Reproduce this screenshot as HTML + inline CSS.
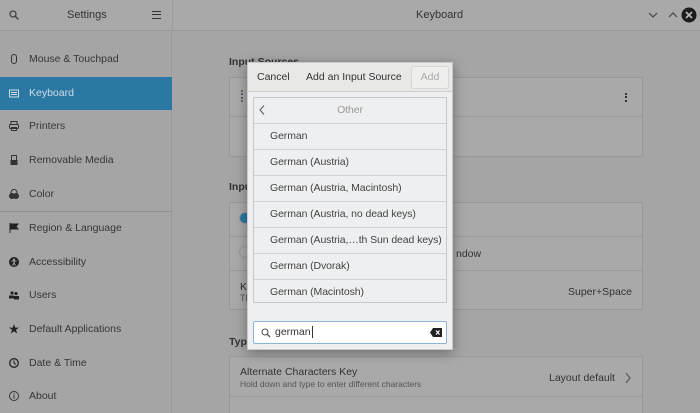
<!DOCTYPE html>
<html style="background:#a5a5a5;width:700px;height:413px;overflow:hidden"><head><meta charset="utf-8"><style>
*{box-sizing:border-box;margin:0;padding:0}
html,body{width:700px;height:413px;overflow:hidden;background:#a5a5a5}
body{font-family:"Liberation Sans",sans-serif;font-size:10.5px;color:#333;position:relative}
.abs{position:absolute}
.hdr{left:0;top:0;width:700px;height:31px;background:#a9a9a9;border-bottom:1px solid #969696}
.side{left:0;top:32px;width:172px;height:381px;border-right:1px solid #999;background:#a5a5a5}
.item{position:absolute;left:0;width:172px;height:33px;line-height:33px;padding-left:29px;color:#363636;white-space:nowrap}
.item .ic{position:absolute;left:9px;top:11px;width:10px;height:10px}
.sel{background:#2a78a3;color:#cfdde6}
.box{background:#a9a9a9;border:1px solid #999;left:229px;width:414px}
.lbl{font-weight:bold;color:#333;left:229px}
.dlg{left:247px;top:62px;width:206px;height:288px;background:#eeeff0;box-shadow:0 3px 12px rgba(0,0,0,.35);border:1px solid #c9c9c9}
.dh{height:29px;background:#e8e8e7;border-bottom:1px solid #cfcfcf;position:relative}
.list{position:absolute;left:5px;top:34px;width:194px;height:206px;border:1px solid #c8c8c8;background:#eeeff0;overflow:hidden}
.row{height:26px;line-height:25px;border-bottom:1px solid #d2d2d2;padding-left:16px;color:#444;white-space:nowrap;overflow:hidden;letter-spacing:-0.1px}
</style></head><body>
<div class="abs hdr">
 <svg class="abs" style="left:9px;top:10px" width="10" height="10"><circle cx="4" cy="4" r="3" fill="none" stroke="#444" stroke-width="1.3"/><line x1="6.3" y1="6.3" x2="9.5" y2="9.5" stroke="#444" stroke-width="1.5"/></svg>
 <div class="abs" style="left:67px;top:9px;color:#333;font-size:11px">Settings</div>
 <div class="abs" style="left:152px;top:11px;width:9px;height:8px;border-top:1.6px solid #333;border-bottom:1.6px solid #333"><div style="margin-top:1.6px;border-top:1.6px solid #333"></div></div>
 <div class="abs" style="left:172px;top:0;width:1px;height:31px;background:#9c9c9c"></div>
 <div class="abs" style="left:416px;top:9px;color:#333;font-size:11px">Keyboard</div>
 <svg class="abs" style="left:648px;top:11px" width="40" height="12"><polyline points="1,2 5,6 9,2" fill="none" stroke="#444" stroke-width="1.2"/><polyline points="21,6 25,2 29,6" fill="none" stroke="#444" stroke-width="1.2"/></svg>
 <svg class="abs" style="left:681px;top:7px" width="16" height="16"><circle cx="8" cy="8" r="7.5" fill="#1d1d1d"/><path d="M5 5L11 11M11 5L5 11" stroke="#bbb" stroke-width="1.6"/></svg>
</div>
<div class="abs side">
 <div class="item" style="top:11px"><svg class="ic" viewBox="0 0 10 10"><rect x="2.5" y="0.5" width="5" height="9" rx="2.5" fill="none" stroke="#333"/></svg>Mouse &amp; Touchpad</div>
 <div class="item sel" style="top:45px"><svg class="ic" viewBox="0 0 10 10"><rect x="0.5" y="2" width="9" height="7" fill="none" stroke="#cfdde6"/><rect x="2" y="4" width="6" height="1" fill="#cfdde6"/><rect x="2" y="6" width="6" height="1" fill="#cfdde6"/></svg>Keyboard</div>
 <div class="item" style="top:78px"><svg class="ic" viewBox="0 0 10 10"><rect x="2" y="0.5" width="6" height="3" fill="none" stroke="#333"/><rect x="0.5" y="3.5" width="9" height="4" rx="1" fill="none" stroke="#333"/><rect x="2.5" y="6.5" width="5" height="3" fill="none" stroke="#333"/></svg>Printers</div>
 <div class="item" style="top:112px"><svg class="ic" viewBox="0 0 10 10"><rect x="2.5" y="0.5" width="5" height="5" fill="none" stroke="#333"/><rect x="1.5" y="5" width="7" height="5" fill="#333"/></svg>Removable Media</div>
 <div class="item" style="top:146px"><svg class="ic" viewBox="0 0 10 10"><circle cx="5" cy="3.5" r="3" fill="none" stroke="#333"/><circle cx="3" cy="7" r="3" fill="#333"/><circle cx="7" cy="7" r="3" fill="#333"/></svg>Color</div>
 <div class="abs" style="left:0;top:179px;width:172px;height:1px;background:#939393"></div>
 <div class="item" style="top:180px"><svg class="ic" viewBox="0 0 10 10"><path d="M1 0V10M1 1H9L7 3.5L9 6H1" fill="#222" stroke="#222"/></svg>Region &amp; Language</div>
 <div class="item" style="top:214px"><svg class="ic" viewBox="0 0 10 10"><circle cx="5" cy="5" r="5" fill="#222"/><circle cx="5" cy="2.5" r="1" fill="#aaa"/><path d="M2.5 4H7.5M5 4V6L3.5 8.5M5 6L6.5 8.5" stroke="#aaa" stroke-width="1"/></svg>Accessibility</div>
 <div class="item" style="top:247px"><svg class="ic" viewBox="0 0 10 10"><circle cx="3" cy="3" r="1.6" fill="#222"/><circle cx="7" cy="3.5" r="1.6" fill="#222"/><rect x="0" y="5.5" width="5" height="3" fill="#222"/><rect x="5" y="6" width="5" height="3.5" fill="#222"/></svg>Users</div>
 <div class="item" style="top:281px"><svg class="ic" viewBox="0 0 10 10"><path d="M5 0L6.2 3.6H10L7 5.8L8.1 9.5L5 7.2L1.9 9.5L3 5.8L0 3.6H3.8Z" fill="#222"/></svg>Default Applications</div>
 <div class="item" style="top:315px"><svg class="ic" viewBox="0 0 10 10"><circle cx="5" cy="5" r="4.3" fill="none" stroke="#222" stroke-width="1.3"/><path d="M5 2.5V5L7 6.5" fill="none" stroke="#222"/></svg>Date &amp; Time</div>
 <div class="item" style="top:348px"><svg class="ic" viewBox="0 0 10 10"><circle cx="5" cy="5" r="4.5" fill="none" stroke="#333" stroke-width=".9"/><rect x="4.5" y="4" width="1" height="3.5" fill="#333"/><rect x="4.5" y="2.3" width="1" height="1" fill="#333"/></svg>About</div>
</div>
<div class="abs lbl" style="top:56px">Input Sources</div>
<div class="abs box" style="top:77px;height:80px"><div style="height:39px;border-bottom:1px solid #999"></div></div>
<div class="abs" style="left:241px;top:90px;width:2px;height:12px;border-left:2px dotted #666"></div>
<div class="abs" style="left:625px;top:93px;width:2px;height:9px;border-left:2px dotted #333"></div>
<div class="abs lbl" style="top:181px">Input Source Switching</div>
<div class="abs box" style="top:202px;height:108px"><div style="height:34px;border-bottom:1px solid #999"></div><div style="height:34px;border-bottom:1px solid #999"></div></div>
<div class="abs" style="left:239px;top:212px;width:12px;height:12px;border-radius:50%;background:#2a78a3;border:1px solid #999"></div>
<div class="abs" style="left:239px;top:246px;width:12px;height:12px;border-radius:50%;border:1px solid #999;background:#adadad"></div>
<div class="abs" style="left:456px;top:248px;color:#333">ndow</div>
<div class="abs" style="left:240px;top:281px;color:#333">Ke</div>
<div class="abs" style="left:240px;top:293px;color:#555;font-size:9px">Th</div>
<div class="abs" style="left:568px;top:286px;color:#333">Super+Space</div>
<div class="abs lbl" style="top:336px">Typing</div>
<div class="abs box" style="top:356px;height:57px;border-bottom:none"><div style="height:40px;border-bottom:1px solid #999"></div></div>
<div class="abs" style="left:240px;top:366px;color:#333">Alternate Characters Key</div>
<div class="abs" style="left:240px;top:379px;color:#555;font-size:8.5px">Hold down and type to enter different characters</div>
<div class="abs" style="left:549px;top:372px;color:#333">Layout default</div>
<svg class="abs" style="left:624px;top:372px" width="8" height="12"><polyline points="2,1 6,6 2,11" fill="none" stroke="#555" stroke-width="1.1"/></svg>
<div class="abs dlg">
 <div class="dh">
  <div class="abs" style="left:9px;top:8px;color:#333">Cancel</div>
  <div class="abs" style="left:58px;top:8px;color:#333;white-space:nowrap">Add an Input Source</div>
  <div class="abs" style="left:163px;top:3px;width:38px;height:23px;border:1px solid #d6d6d6;border-radius:3px;background:#eeeeed;color:#a8a8a8;text-align:center;line-height:21px">Add</div>
 </div>
 <div class="list">
  <div class="row" style="color:#999;text-align:center;padding-left:0;position:relative">Other<svg class="abs" style="left:5px;top:7px" width="6" height="10"><polyline points="5,0.5 1,5 5,9.5" fill="none" stroke="#555"/></svg></div>
  <div class="row">German</div>
  <div class="row">German (Austria)</div>
  <div class="row">German (Austria, Macintosh)</div>
  <div class="row">German (Austria, no dead keys)</div>
  <div class="row">German (Austria,…th Sun dead keys)</div>
  <div class="row">German (Dvorak)</div>
  <div class="row">German (Macintosh)</div>
 </div>
 <div class="abs" style="left:5px;top:258px;width:194px;height:23px;background:#fff;border:1px solid #8db4d6;border-radius:2px">
  <svg class="abs" style="left:7px;top:6px" width="10" height="10"><circle cx="4" cy="4" r="3" fill="none" stroke="#555" stroke-width="1.1"/><line x1="6.2" y1="6.2" x2="9" y2="9" stroke="#555" stroke-width="1.3"/></svg>
  <div class="abs" style="left:21px;top:4px;color:#333">german<span style="border-left:1px solid #333;margin-left:1px"></span></div>
  <svg class="abs" style="left:176px;top:6px" width="12" height="9"><path d="M3 0H12V9H3L0 4.5Z" fill="#222"/><path d="M6 2.5L9.5 6.5M9.5 2.5L6 6.5" stroke="#fff" stroke-width="1.2"/></svg>
 </div>
</div>
</body></html>
